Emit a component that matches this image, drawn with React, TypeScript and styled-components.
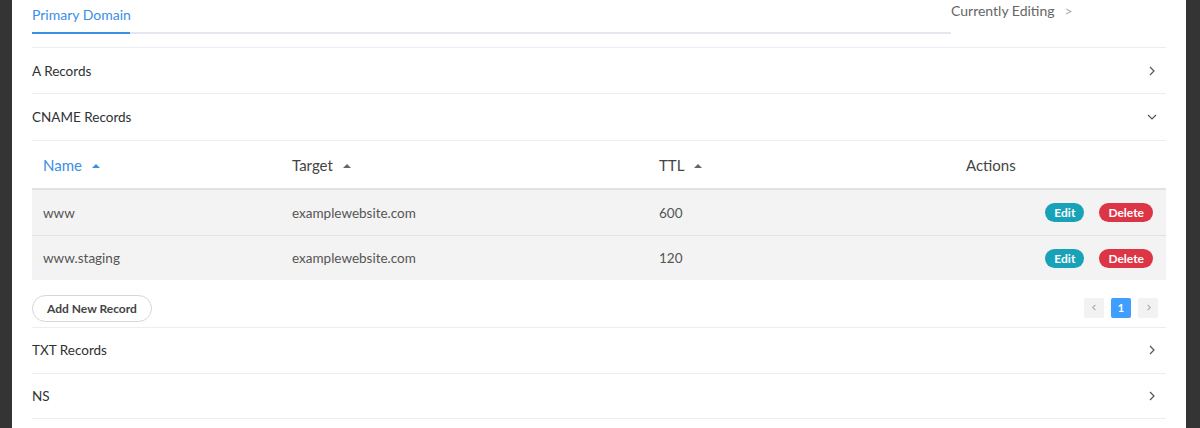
import React from "react";
import styled, { createGlobalStyle } from "styled-components";

const Global = createGlobalStyle`
  html, body { margin: 0; padding: 0; background: #343434; }
  body { font-family: Lato, "Open Sans", sans-serif; }
`

const Panel = styled.div`
  margin: 0 14px 0 12px;
  background: #fff;
  height: 428px;
  padding: 0 20px;
  box-sizing: border-box;
  overflow: hidden;
`

const TopBar = styled.div`
  display: flex;
  align-items: flex-start;
  height: 47px;
`

const Tabs = styled.div`
  flex: 1;
  height: 34px;
  border-bottom: 2px solid #e4e7ed;
  box-sizing: border-box;
  display: flex;
`

const Tab = styled.div<{ active?: boolean }>`
  height: 34px;
  box-sizing: border-box;
  padding-top: 6px;
  font-size: 14px;
  color: ${p => (p.active ? "#3a8ee6" : "#555")};
  border-bottom: 2px solid ${p => (p.active ? "#3a8ee6" : "transparent")};
  width: 98px;
  white-space: nowrap;
`

const Editing = styled.div`
  width: 215px;
  padding-top: 2px;
  font-size: 14px;
  color: #666;
  span { color: #aaa; margin-left: 10px; }
`

const Item = styled.div`
  border-top: 1px solid #ebeef5;
`

const ItemHead = styled.div<{ h?: number }>`
  height: ${p => p.h ?? 45}px;
  display: flex;
  align-items: center;
  justify-content: space-between;
  font-size: 13.5px;
  color: #303133;
`

const Chevron = styled.svg`
  width: 12px;
  height: 12px;
  margin-right: 8px;
  fill: none;
  stroke: #555;
  stroke-width: 1.2;
`

const Table = styled.table`
  width: 100%;
  table-layout: fixed;
  border-collapse: collapse;
  font-size: 13.5px;
`

const Th = styled.th<{ active?: boolean; w: number }>`
  width: ${p => p.w}px;
  text-align: left;
  font-weight: 400;
  font-size: 15px;
  color: ${p => (p.active ? "#3a8ee6" : "#444")};
  height: 48px;
  padding: 2px 11px 0;
  box-sizing: border-box;
  border-bottom: 2px solid #e2e2e2;
  border-top: 1px solid #ebeef5;
`

const Caret = styled.span<{ active?: boolean }>`
  display: inline-block;
  margin-left: 10px;
  vertical-align: middle;
  width: 0;
  height: 0;
  border-left: 4px solid transparent;
  border-right: 4px solid transparent;
  border-bottom: 4px solid ${p => (p.active ? "#3a8ee6" : "#666")};
  position: relative;
  top: -1px;
`

const Td = styled.td<{ right?: boolean }>`
  background: #f3f3f3;
  height: 44px;
  padding: 1px 13px 0 11px;
  color: #555;
  text-align: ${p => (p.right ? "right" : "left")};
  border-bottom: 1px solid #e3e3e3;
  tr:last-child & { border-bottom: none; height: 43px; }
`

const Pill = styled.button<{ tone: string }>`
  border: none;
  border-radius: 10px;
  background: ${p => p.tone};
  color: #fff;
  font-family: inherit;
  font-size: 12px;
  font-weight: 700;
  height: 19px;
  padding: 0 9px;
  margin-left: 15px;
  cursor: pointer;
  vertical-align: middle;
`

const Footer = styled.div`
  height: 46px;
  display: flex;
  align-items: center;
  justify-content: space-between;
  padding-bottom: 1px;
`

const AddButton = styled.button`
  font-family: inherit;
  font-size: 12px;
  font-weight: 700;
  color: #444;
  background: #fff;
  border: 1px solid #d6d6d6;
  border-radius: 14px;
  height: 27px;
  padding: 0 14px;
  margin-top: 12px;
`

const Pager = styled.div`
  display: flex;
  gap: 7px;
  margin-right: 8px;
  margin-top: 10px;
`

const PageBtn = styled.div<{ current?: boolean }>`
  width: 20px;
  height: 20px;
  border-radius: 2px;
  display: flex;
  align-items: center;
  justify-content: center;
  font-size: 11px;
  font-weight: 700;
  background: ${p => (p.current ? "#409eff" : "#f2f2f2")};
  color: ${p => (p.current ? "#fff" : "#bbb")};
  svg { width: 9px; height: 9px; fill: none; stroke: #aaa; stroke-width: 1.2; }
`

const Right = () => (
  <Chevron viewBox="0 0 12 12"><path d="M4 2 L8 6 L4 10" /></Chevron>
)
const Down = () => (
  <Chevron viewBox="0 0 12 12"><path d="M2 4 L6 8 L10 4" /></Chevron>
)

const rows = [
  { name: "www", target: "examplewebsite.com", ttl: "600" },
  { name: "www.staging", target: "examplewebsite.com", ttl: "120" },
]

export default function App() {
  return (
    <>
      <Global />
      <Panel>
        <TopBar>
          <Tabs><Tab active>Primary Domain</Tab></Tabs>
          <Editing>Currently Editing<span>&gt;</span></Editing>
        </TopBar>
        <Item><ItemHead>A Records<Right /></ItemHead></Item>
        <Item>
          <ItemHead h={46}>CNAME Records<Down /></ItemHead>
          <Table>
            <thead>
              <tr>
                <Th w={249} active>Name<Caret active /></Th>
                <Th w={367}>Target<Caret /></Th>
                <Th w={307}>TTL<Caret /></Th>
                <Th w={211}>Actions</Th>
              </tr>
            </thead>
            <tbody>
              {rows.map(r => (
                <tr key={r.name}>
                  <Td>{r.name}</Td>
                  <Td>{r.target}</Td>
                  <Td>{r.ttl}</Td>
                  <Td right>
                    <Pill tone="#17a2b8">Edit</Pill>
                    <Pill tone="#dc3545">Delete</Pill>
                  </Td>
                </tr>
              ))}
            </tbody>
          </Table>
          <Footer>
            <AddButton>Add New Record</AddButton>
            <Pager>
              <PageBtn><svg viewBox="0 0 10 10"><path d="M6 2 L3 5 L6 8" /></svg></PageBtn>
              <PageBtn current>1</PageBtn>
              <PageBtn><svg viewBox="0 0 10 10"><path d="M4 2 L7 5 L4 8" /></svg></PageBtn>
            </Pager>
          </Footer>
        </Item>
        <Item><ItemHead>TXT Records<Right /></ItemHead></Item>
        <Item><ItemHead h={44}>NS<Right /></ItemHead></Item>
        <Item />
      </Panel>
    </>
  )
}
